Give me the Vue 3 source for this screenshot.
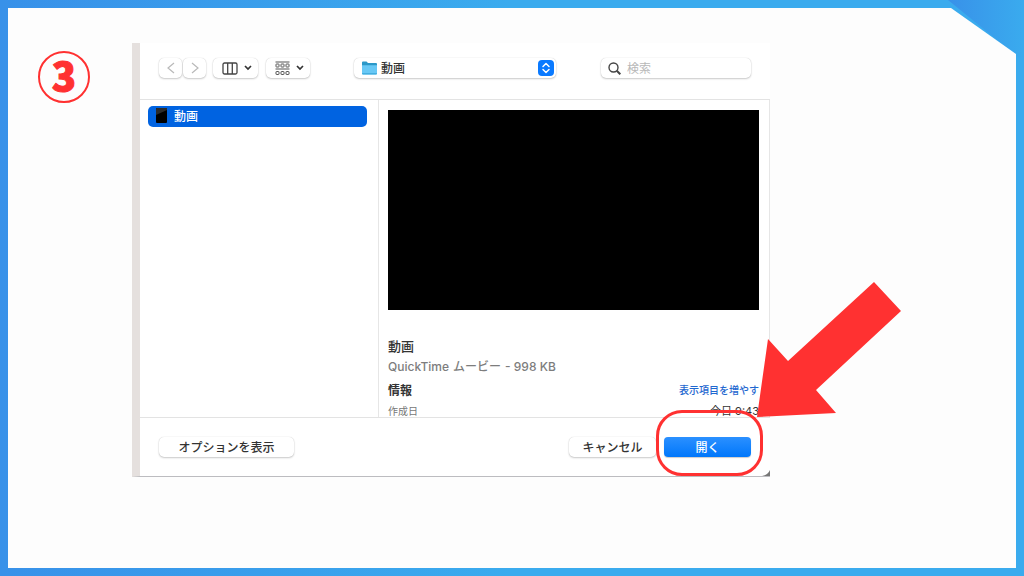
<script setup>
import { ref } from 'vue'

const folder = ref('動画')
const query = ref('')
const cells = [0, 5, 10]
</script>

<template>
  <div class="page">
    <svg class="fold" viewBox="0 0 76 62" preserveAspectRatio="none" aria-hidden="true">
      <defs>
        <linearGradient id="foldFill" x1="0" y1="0" x2="1" y2="0">
          <stop offset="0" stop-color="#3891e9" />
          <stop offset="1" stop-color="#3aabee" />
        </linearGradient>
      </defs>
      <path d="M0 0H76V62Z" fill="url(#foldFill)" />
    </svg>
    <main class="sheet">
      <div class="step">3</div>
      <section class="dialog">
        <header class="toolbar">
          <div class="nav">
            <button class="ctl arrow-btn" aria-label="戻る">
              <svg width="8" height="12" viewBox="0 0 8 12"><path d="M7 1L1 6l6 5" fill="none" stroke="#b9b9b9" stroke-width="1.200" /></svg>
            </button>
            <button class="ctl arrow-btn" aria-label="進む">
              <svg width="8" height="12" viewBox="0 0 8 12"><path d="M1 1L7 6l-6 5" fill="none" stroke="#b9b9b9" stroke-width="1.200" /></svg>
            </button>
          </div>
          <button class="ctl view-btn" aria-label="カラム表示">
            <svg width="16" height="13" viewBox="0 0 16 13" fill="none" stroke="#444" stroke-width="1.300">
              <rect x="1" y="1" width="14" height="11" rx="1.500" /><path d="M5.700 1v11M10.300 1v11" />
            </svg>
            <svg width="8" height="6" viewBox="0 0 8 6"><path d="M1 1l3 3 3-3" fill="none" stroke="#333" stroke-width="1.700" /></svg>
          </button>
          <button class="ctl view-btn" aria-label="グループ">
            <svg width="15" height="15" viewBox="0 0 15 15" fill="none" stroke="#555" stroke-width="1">
              <path d="M0.500 1H14.500M0.500 8H14.500" />
              <g v-for="c in cells" :key="c">
                <rect :x="c + 1" y="3" width="3" height="3" rx="0.500" /><rect :x="c + 1" y="10.500" width="3" height="3" rx="0.500" />
              </g>
            </svg>
            <svg width="8" height="6" viewBox="0 0 8 6"><path d="M1 1l3 3 3-3" fill="none" stroke="#333" stroke-width="1.700" /></svg>
          </button>
          <div class="picker">
            <svg class="folder" width="15" height="14" viewBox="0 0 15 14" aria-hidden="true">
              <path d="M0 1.500Q0 0.500 1 0.500H4.500L6 2H14Q15 2 15 3V6H0Z" fill="#2b98c8" />
              <path d="M0 4.200H15V12.500Q15 13.500 14 13.500H1Q0 13.500 0 12.500Z" fill="#68c8f5" />
              <path d="M0 12H15V12.500Q15 13.500 14 13.500H1Q0 13.500 0 12.500Z" fill="#45afe0" />
            </svg>
            <select v-model="folder" class="ctl" aria-label="フォルダ">
              <option>動画</option>
            </select>
            <svg class="stepper" width="16" height="16" viewBox="0 0 16 16" aria-hidden="true">
              <rect width="16" height="16" rx="4" fill="#0a7aff" />
              <path d="M5 6.500L8 3.500l3 3M5 9.500l3 3 3-3" fill="none" stroke="#fff" stroke-width="1.500" stroke-linecap="round" stroke-linejoin="round" />
            </svg>
          </div>
          <label class="ctl search">
            <svg width="13" height="13" viewBox="0 0 13 13" fill="none" stroke="#444" aria-hidden="true">
              <circle cx="5.500" cy="5.500" r="4.500" stroke-width="1.400" /><path d="M8.800 8.800L12.300 12.300" stroke-width="2" />
            </svg>
            <input v-model="query" type="search" placeholder="検索" aria-label="検索" />
          </label>
        </header>

        <div class="browser">
          <nav class="files">
            <button class="file">
              <svg width="11" height="15" viewBox="0 0 11 15" aria-hidden="true">
                <rect width="11" height="15" rx="1" fill="#000" /><path d="M0 1Q0 0 1 0H11V2L0 7Z" fill="#2b2b2b" />
              </svg>
              動画
            </button>
          </nav>
          <article class="preview">
            <div class="video"></div>
            <h1>動画</h1>
            <p class="kind"><span>QuickTime</span><span>ムービー</span><span>- 998 KB</span></p>
            <div class="row">
              <h2>情報</h2>
              <a href="#">表示項目を増やす</a>
            </div>
            <div class="row date">
              <span>作成日</span>
              <time>今日 9:43</time>
            </div>
          </article>
        </div>

        <footer class="actions">
          <button class="ctl options">オプションを表示</button>
          <button class="ctl cancel">キャンセル</button>
          <div class="open-wrap">
            <button class="open">開く</button>
            <span class="ring"></span>
          </div>
        </footer>
        <svg class="grip" width="8" height="6" viewBox="0 0 8 6" aria-hidden="true"><path d="M8 0V6H0Q6 5 8 0Z" fill="#777" /></svg>
        <svg class="pointer" width="144" height="136" viewBox="0 0 144 136" aria-hidden="true">
          <path d="M117 0L144 29L59 108L79 131L0 135L11 57L31 79Z" fill="#ff3131" />
        </svg>
      </section>
    </main>
  </div>
</template>

<style>
body {
  margin: 0;
}
</style>

<style scoped>
* {
  box-sizing: border-box;
}
.page {
  position: relative;
  display: flex;
  min-height: 100vh;
  padding: 8px;
  background: linear-gradient(90deg, #3891e9, #3aabee 50%);
  font-family: Inter, "Noto Sans CJK JP", sans-serif;
  font-size: 12px;
  color: #333;
}
button,
select,
input {
  font: inherit;
  color: inherit;
}
button,
select {
  font-weight: 500;
}
.fold {
  position: absolute;
  top: 0;
  right: 0;
  width: 76px;
  height: 62px;
}
.sheet {
  flex: 1;
  display: flex;
  align-items: stretch;
  gap: 42px;
  padding: 35px 246px 91px 30px;
  background: #fdfdfd;
  clip-path: polygon(0 0, calc(100% - 65px) 0, 100% 46px, 100% 100%, 0 100%);
}
.step {
  display: flex;
  flex: none;
  align-items: center;
  justify-content: center;
  width: 52px;
  height: 52px;
  margin-top: 8px;
  padding-bottom: 6px;
  border: 2px solid #ff3131;
  border-radius: 50%;
  color: #ff3131;
  font: 900 40px/48px "Noto Sans CJK JP", sans-serif;
  -webkit-text-stroke: 1px #ff3131;
}
.dialog {
  position: relative;
  flex: 1;
  display: flex;
  flex-direction: column;
  min-width: 0;
  border-left: 8px solid #e5e0de;
  border-bottom: 1px solid #bcbcc0;
  background: #fff;
}
.ctl {
  height: 20px;
  border: 0;
  border-radius: 5px;
  background: #fff;
  box-shadow: 0 0 1px rgba(0, 0, 0, 0.2), 0 1px 2px rgba(0, 0, 0, 0.2);
}
.toolbar {
  display: flex;
  align-items: center;
  height: 57px;
  padding: 0 19px 6px 19px;
  border-bottom: 1px solid #e3e3e3;
}
.nav {
  display: flex;
  gap: 1px;
  margin-right: 7px;
}
.arrow-btn {
  display: flex;
  align-items: center;
  justify-content: center;
  width: 23px;
  padding: 0;
}
.view-btn {
  display: flex;
  align-items: center;
  justify-content: space-between;
  width: 45px;
  margin-right: 8px;
  padding: 0 6px 0 9px;
}
.view-btn + .view-btn {
  width: 44px;
}
.picker {
  position: relative;
  flex: 1;
  margin: 0 45px 0 36px;
}
.picker select {
  display: block;
  width: 100%;
  padding: 0 27px;
  appearance: none;
}
.folder {
  position: absolute;
  top: 3px;
  left: 8px;
}
.stepper {
  position: absolute;
  top: 2px;
  right: 2px;
}
.search {
  display: flex;
  align-items: center;
  gap: 6px;
  width: 150px;
  padding: 0 7px;
}
.search svg {
  flex: none;
}
.search input {
  flex: 1;
  min-width: 0;
  padding: 0;
  border: 0;
  outline: 0;
  background: none;
}
.search input::placeholder {
  color: #b8b8b8;
}
.browser {
  flex: 1 0 auto;
  display: flex;
  border-right: 1px solid #e6e6e6;
}
.files {
  flex: none;
  width: 38%;
  padding: 6px 11px 0 8px;
  border-right: 1px solid #e6e6e6;
}
.file {
  display: flex;
  align-items: center;
  gap: 7px;
  width: 100%;
  height: 21px;
  padding: 0 8px 2px;
  border: 0;
  border-radius: 5px;
  background: #0063e1;
  color: #fff;
}
.preview {
  flex: 1;
  min-width: 0;
  padding: 10px 10px 0 9px;
}
.video {
  aspect-ratio: 371 / 200;
  margin-bottom: 26px;
  background: #000;
}
h1,
h2,
p {
  margin: 0;
}
h1 {
  font-size: 13px;
  font-weight: 500;
  line-height: 20px;
}
.kind {
  display: flex;
  gap: 4px;
  color: #7d7d7d;
  font-weight: 500;
  line-height: 21px;
}
.row {
  display: flex;
  align-items: center;
  justify-content: space-between;
  height: 25px;
}
h2 {
  font-size: 12px;
  font-weight: 700;
}
.row a {
  color: #1f68d0;
  font-size: 10px;
  font-weight: 500;
  text-decoration: none;
}
.date {
  align-items: flex-end;
  height: 15px;
  font-size: 10px;
  line-height: 12px;
}
.date span {
  color: #777;
}
.actions {
  display: flex;
  align-items: center;
  height: 59px;
  padding: 0 19px;
  border-top: 1px solid #e3e3e3;
}
.date time {
  font-size: 11px;
}
.options {
  width: 135px;
  padding: 0 0 2px;
}
.cancel {
  width: 87px;
  margin-left: auto;
  padding: 0 0 2px;
}
.open-wrap {
  position: relative;
  margin-left: 8px;
}
.open {
  display: block;
  width: 87px;
  height: 20px;
  padding: 0 0 2px;
  border: 0;
  border-radius: 4px;
  background: linear-gradient(#2b90ff, #0077fb);
  box-shadow: 0 1px 1px rgba(0, 0, 0, 0.2);
  color: #fff;
}
.ring {
  position: absolute;
  inset: -27px -12px -19px -8px;
  border: 3px solid #ff3131;
  border-radius: 26px;
  pointer-events: none;
}
.grip {
  position: absolute;
  right: 0;
  bottom: 0;
}
.pointer {
  position: absolute;
  right: -131px;
  bottom: 58px;
}
</style>
